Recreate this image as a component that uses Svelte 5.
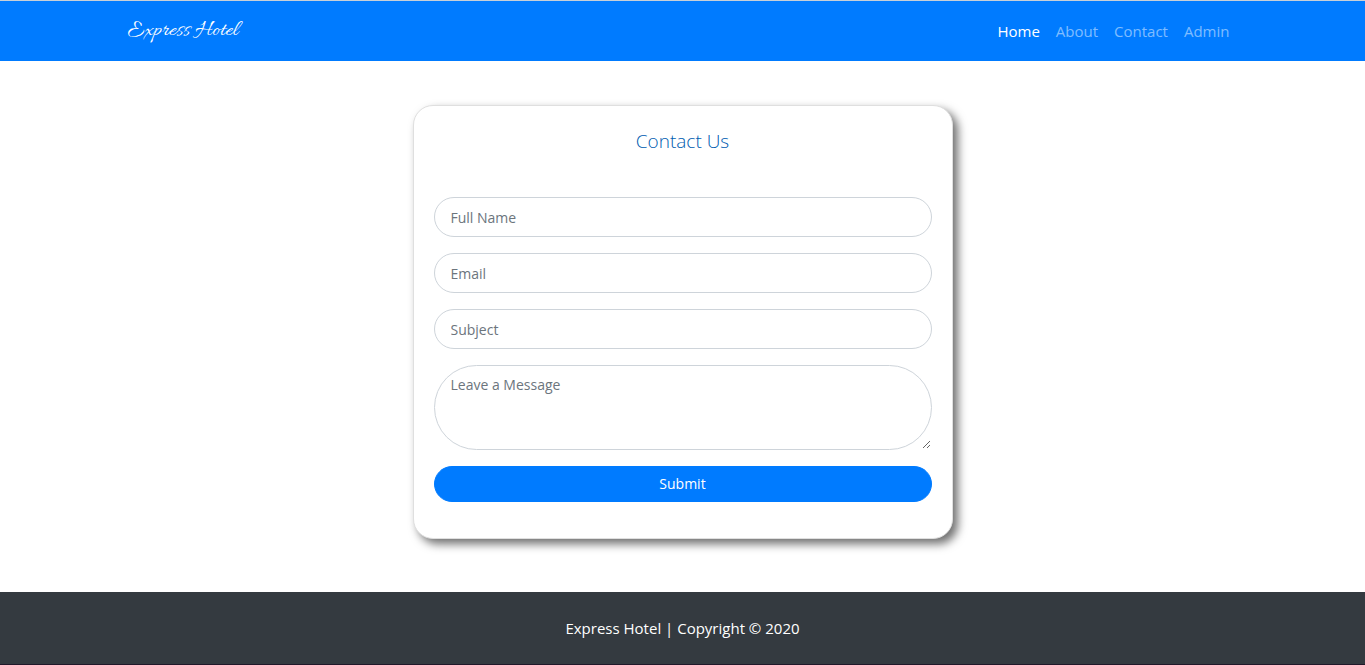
<script>
  const links = ['Home', 'About', 'Contact', 'Admin'];
  const fields = [
    { id: 'name', label: 'Full Name', type: 'text' },
    { id: 'email', label: 'Email', type: 'email' },
    { id: 'subject', label: 'Subject', type: 'text' }
  ];
</script>

<div class="page">
  <header>
    <nav>
      <a class="brand" href="#home">Express Hotel</a>
      <ul>
        {#each links as link, i}
          <li><a class:active={i === 0} href="#{link.toLowerCase()}">{link}</a></li>
        {/each}
      </ul>
    </nav>
  </header>

  <main>
    <form class="card" onsubmit={(e) => e.preventDefault()}>
      <h1>Contact Us</h1>
      {#each fields as f}
        <input id={f.id} type={f.type} placeholder={f.label} aria-label={f.label} />
      {/each}
      <textarea id="message" placeholder="Leave a Message" aria-label="Leave a Message"></textarea>
      <button type="submit">Submit</button>
    </form>
  </main>

  <footer>Express Hotel | Copyright © 2020</footer>
</div>

<style>
  :global(body) { background: #fff; }
  .page {
    display: flex;
    flex-direction: column;
    min-height: 100vh;
    font: 15px/24px "Open Sans", "Noto Sans", sans-serif;
  }
  .page, .page * { box-sizing: border-box; }
  header {
    background: #007bff;
    border-top: 1px solid #c8d0d8;
  }
  nav {
    display: flex;
    align-items: center;
    justify-content: space-between;
    max-width: 1140px;
    height: 60px;
    margin: 0 auto;
    padding: 0 15px;
  }
  a { text-decoration: none; }
  .brand {
    color: #fff;
    font: 23px/30px "Allura", "Alex Brush", "Brush Script MT", "Segoe Script", cursive;
  }
  ul {
    display: flex;
    gap: 16px;
    margin: 0;
    padding: 0 8px 0 0;
    list-style: none;
  }
  li a { color: rgba(255, 255, 255, 0.5); }
  li a.active { color: #fff; }
  main {
    flex: 1;
    padding: 44px 16px 53px;
  }
  .card {
    display: flex;
    flex-direction: column;
    gap: 16px;
    max-width: 540px;
    margin: 0 auto;
    padding: 20px 20px 36px;
    background: #fff;
    border: 1px solid #dfdfdf;
    border-radius: 20px;
    box-shadow: 5px 5px 10px #707070;
  }
  h1 {
    margin: 0 0 25px;
    color: #005cb0;
    font-size: 19px;
    font-weight: 300;
    line-height: 30px;
    text-align: center;
  }
  input, textarea, button {
    width: 100%;
    margin: 0;
    font: 14px/22px "Open Sans", "Noto Sans", sans-serif;
  }
  input, textarea {
    color: #495057;
    background: #fff;
    border: 1px solid #ced4da;
    padding: 8px 16px;
  }
  input { height: 40px; border-radius: 24px; }
  textarea {
    display: block;
    height: 85px;
    border-radius: 48px;
    resize: vertical;
  }
  ::placeholder { color: #6c757d; opacity: 1; }
  button {
    height: 36px;
    padding: 0 16px;
    color: #fff;
    background: #007bff;
    border: 1px solid #007bff;
    border-radius: 24px;
  }
  footer {
    padding: 24px 16px;
    color: #fff;
    background: #343a40;
    border-bottom: 1px solid #21182a;
    text-align: center;
  }
</style>
